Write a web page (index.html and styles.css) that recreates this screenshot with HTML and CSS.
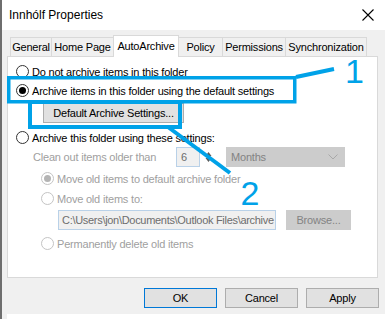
FILE: index.html
```html
<!DOCTYPE html>
<html lang="en">
<head>
    <meta charset="UTF-8">
    <title>Innhólf Properties</title>
    <link rel="stylesheet" href="styles.css">
</head>
<body>
    <div class="window">
        <div class="titlebar">
            <span class="title">Innhólf Properties</span>
            <svg class="close" width="12" height="12" viewBox="0 0 12 12">
                <path d="M0.5 0.5 L11.5 11.5 M11.5 0.5 L0.5 11.5" stroke="#000" stroke-width="1.1" fill="none"/>
            </svg>
        </div>

        <div class="tabs">
            <div class="tab">General</div>
            <div class="tab">Home Page</div>
            <div class="tab active">AutoArchive</div>
            <div class="tab">Policy</div>
            <div class="tab">Permissions</div>
            <div class="tab">Synchronization</div>
        </div>

        <div class="panel">
            <div class="row r1"><span class="radio"></span>Do not archive items in this folder</div>
            <div class="row"><span class="radio checked"></span>Archive items in this folder using the default settings</div>
            <div class="btn default-settings">Default Archive Settings...</div>
            <div class="row r3"><span class="radio"></span>Archive this folder using these settings:</div>

            <div class="row clean disabled">
                <span class="clean-label">Clean out items older than</span>
                <span class="spin">
                    <span class="spin-value">6</span>
                    <span class="spin-arrows">
                        <svg width="7" height="12" viewBox="0 0 7 12">
                            <path d="M3.5 1 L6.5 5 L0.5 5 Z M0.5 7 L6.5 7 L3.5 11 Z" fill="#5a5a5a"/>
                        </svg>
                    </span>
                </span>
                <span class="select">
                    Months
                    <svg width="10" height="6" viewBox="0 0 10 6">
                        <path d="M0.5 0.5 L5 5 L9.5 0.5" stroke="#a8a8a8" fill="none"/>
                    </svg>
                </span>
            </div>

            <div class="row sub disabled r5"><span class="radio checked"></span>Move old items to default archive folder</div>
            <div class="row sub disabled r6"><span class="radio"></span>Move old items to:</div>
            <div class="path-row">
                <span class="path">C:\Users\jon\Documents\Outlook Files\archive</span>
                <span class="btn browse">Browse...</span>
            </div>
            <div class="row sub disabled r8"><span class="radio"></span>Permanently delete old items</div>
        </div>

        <div class="buttons">
            <div class="btn dlg primary">OK</div>
            <div class="btn dlg">Cancel</div>
            <div class="btn dlg">Apply</div>
        </div>
        <div class="footer"></div>

        <!-- annotations drawn on top of the dialog -->
        <svg class="marks" width="385" height="319" viewBox="0 0 385 319">
            <g stroke="#00a2e8" fill="none">
                <rect x="8.75" y="77.75" width="286" height="24" stroke-width="3.5"/>
                <rect x="30" y="102" width="150" height="25" stroke-width="4"/>
                <path d="M296 77 L334 69" stroke-width="4"/>
                <path d="M168 127 L230 173" stroke-width="4"/>
            </g>
            <text class="mark-num" x="345" y="83">1</text>
            <text class="mark-num" x="240.5" y="205">2</text>
        </svg>
    </div>
</body>
</html>
```

FILE: styles.css
```css
* {
    margin: 0;
    padding: 0;
    box-sizing: border-box;
}

body {
    width: 385px;
    height: 319px;
    overflow: hidden;
    font-family: "Liberation Sans", Arial, sans-serif;
    font-size: 11px;
    letter-spacing: -0.2px;
    color: #000;
}

.window {
    position: relative;
    width: 385px;
    height: 319px;
    background: #f0f0f0;
    border-left: 2px solid #6e6e6e;
}

.titlebar {
    height: 30px;
    background: #fff;
    display: flex;
    align-items: center;
    justify-content: space-between;
    padding: 0 11px 0 7px;
}

.title {
    font-size: 12px;
    letter-spacing: 0;
}

.tabs {
    display: flex;
    align-items: flex-end;
    height: 21px;
    margin: 5px 0 0 8px;
}

.tab {
    position: relative;
    height: 19px;
    margin-right: -1px;
    display: flex;
    align-items: center;
    justify-content: center;
    white-space: nowrap;
    background: #f0f0f0;
    border: 1px solid #d9d9d9;
    border-bottom: none;
    color: #000;
}

.tab:nth-child(1) { width: 42px; }
.tab:nth-child(2) { width: 63px; }
.tab:nth-child(3) { width: 66px; }
.tab:nth-child(4) { width: 45px; }
.tab:nth-child(5) { width: 64px; }
.tab:nth-child(6) { width: 82px; }

.tab.active {
    z-index: 2;
    height: 22px;
    margin-bottom: -1px;
    padding-bottom: 2px;
    background: #fff;
}

.panel {
    position: relative;
    width: 371px;
    height: 222px;
    margin-left: 5px;
    padding: 5px 0 0 8px;
    background: #fff;
    border: 1px solid #d9d9d9;
}

.row {
    display: flex;
    align-items: center;
    height: 19px;
    gap: 3px;
}

.radio {
    position: relative;
    width: 13px;
    height: 13px;
    border: 1px solid #333;
    border-radius: 50%;
    background: #fff;
    flex-shrink: 0;
}

.radio.checked::after {
    content: "";
    position: absolute;
    left: 2px;
    top: 2px;
    width: 7px;
    height: 7px;
    border-radius: 50%;
    background: #000;
}

.disabled {
    color: #a0a0a0;
}

.disabled .radio {
    border-color: #c4c4c4;
}

.disabled .radio.checked::after {
    background: #b4b4b4;
}

.btn {
    display: flex;
    align-items: center;
    justify-content: center;
    background: #e1e1e1;
    border: 1px solid #adadad;
}

.default-settings {
    width: 141px;
    height: 20px;
    margin: 3px 0 0 27px;
}

.r3 {
    margin-top: 5px;
}

.sub {
    padding-left: 25px;
}

.clean {
    height: 20px;
    gap: 0;
}

.clean-label {
    width: 160px;
    padding-left: 17px;
}

.spin {
    display: flex;
    height: 20px;
}

.spin-value {
    width: 24px;
    padding-left: 4px;
    display: flex;
    align-items: center;
    color: #6d6d6d;
    background: #f0f0f0;
    border: 1px solid #b9d1e8;
}

.spin-arrows {
    width: 16px;
    display: flex;
    align-items: center;
    justify-content: center;
}

.select {
    width: 119px;
    height: 20px;
    margin-left: 10px;
    padding: 0 7px 0 5px;
    display: flex;
    align-items: center;
    justify-content: space-between;
    background: #cccccc;
    color: #838383;
}

.r5 {
    margin-top: 2px;
}

.r6 {
    margin-top: 1px;
}

.path-row {
    display: flex;
    height: 20px;
    margin: 2px 0 0 42px;
    gap: 10px;
}

.path {
    width: 218px;
    padding: 0 3px;
    display: flex;
    align-items: center;
    white-space: nowrap;
    letter-spacing: -0.3px;
    color: #6d6d6d;
    background: #f0f0f0;
    border: 1px solid #b9d1e8;
}

.browse {
    width: 65px;
    background: #cccccc;
    border-color: #cccccc;
    color: #838383;
}

.r8 {
    margin-top: 4px;
}

.buttons {
    display: flex;
    justify-content: flex-end;
    gap: 8px;
    height: 20px;
    margin-top: 10px;
    padding-right: 6px;
}

.dlg {
    width: 73px;
}

.primary {
    border-color: #0078d7;
}

.footer {
    height: 10px;
    margin: 6px 0 0 5px;
    background: #fff;
}

.marks {
    position: absolute;
    left: -2px;
    top: 0;
}

.mark-num {
    font-family: "Liberation Sans", Arial, sans-serif;
    font-size: 34px;
    letter-spacing: 0;
    fill: #00a2e8;
}
```
